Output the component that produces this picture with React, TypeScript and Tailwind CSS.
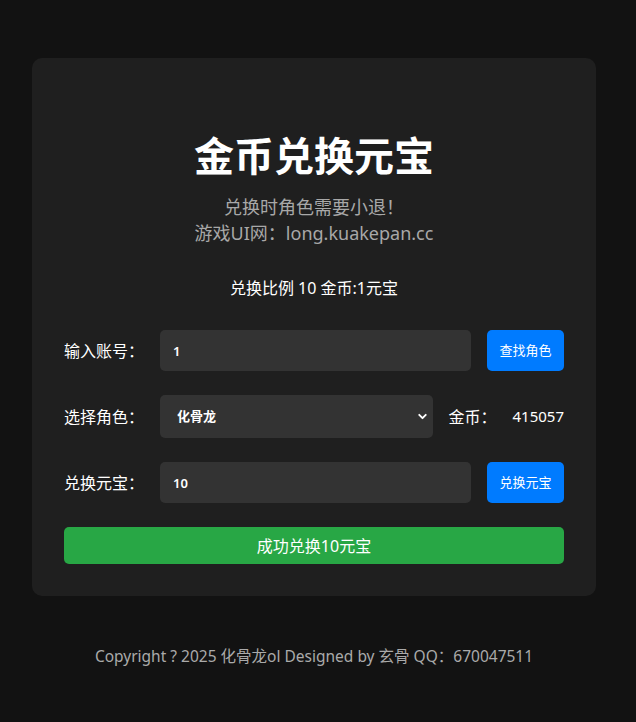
import { ChevronDown } from 'lucide-react';

const font = { fontFamily: '"Noto Sans", "Noto Sans CJK SC", sans-serif' };
const cjk = { fontFamily: '"Noto Sans CJK SC", sans-serif' };

// fullwidth punctuation, Noto Sans draws it narrow
const P = ({ c }: { c: string }) => (
  <span className="leading-[0]" style={cjk}>
    {c}
  </span>
);

const App = () => {
  return (
    <div className="min-h-[722px] bg-[#121212] pt-[58px] text-white" style={font}>
      <div className="ml-8 w-[564px] rounded-[10px] bg-[#1f1f1f] px-8 pt-8 pb-8">
        <h1 className="mt-[44px] text-center text-[40px] font-bold leading-[43px]">金币兑换元宝</h1>
        <div className="mt-[17px] text-center text-[18px] leading-[26px] text-[#a8a8a8]">
          <p>兑换时角色需要小退<P c="！" /></p>
          <p>游戏UI网<P c="：" />long.kuakepan.cc</p>
        </div>
        <p className="mt-[31px] text-center text-[16px] leading-[22px]">兑换比例 10 金币:1元宝</p>

        {/* 账号 */}
        <div className="mt-[31px] flex h-[41px] items-center">
          <label className="w-24 text-[16px]">输入账号<P c="：" /></label>
          <input
            defaultValue="1"
            className="h-full flex-1 rounded-[5px] bg-[#333333] px-[13px] text-[13px] font-semibold text-white outline-none"
          />
          <button className="ml-4 h-full w-[77px] rounded-[5px] bg-[#007bff] text-[13px]">查找角色</button>
        </div>

        {/* 角色 */}
        <div className="mt-6 flex h-[43px] items-center">
          <label className="w-24 text-[16px]">选择角色<P c="：" /></label>
          <div className="relative h-full flex-1">
            <select className="h-full w-full appearance-none rounded-[5px] bg-[#333333] px-[17px] text-[13px] font-semibold text-white outline-none">
              <option>化骨龙</option>
            </select>
            <ChevronDown className="pointer-events-none absolute right-[4px] top-[15px] h-[13px] w-[13px]" strokeWidth={3.5} />
          </div>
          <span className="ml-4 w-16 text-[16px]">金币<P c="：" /></span>
          <span className="text-[15px]">415057</span>
        </div>

        {/* 兑换 */}
        <div className="mt-6 flex h-[41px] items-center">
          <label className="w-24 text-[16px]">兑换元宝<P c="：" /></label>
          <input
            defaultValue="10"
            className="h-full flex-1 rounded-[5px] bg-[#333333] px-[13px] text-[13px] font-semibold text-white outline-none"
          />
          <button className="ml-4 h-full w-[77px] rounded-[5px] bg-[#007bff] text-[13px]">兑换元宝</button>
        </div>

        <button className="mt-6 h-[37px] w-full rounded-[5px] bg-[#28a745] text-[16px]">成功兑换10元宝</button>
      </div>

      <p className="mt-[49px] w-[628px] text-center text-[15.5px] leading-[22px] text-[#aaaaaa]">
        Copyright ? 2025 化骨龙ol Designed by 玄骨 QQ<P c="：" />670047511
      </p>
    </div>
  );
};

export default App;
